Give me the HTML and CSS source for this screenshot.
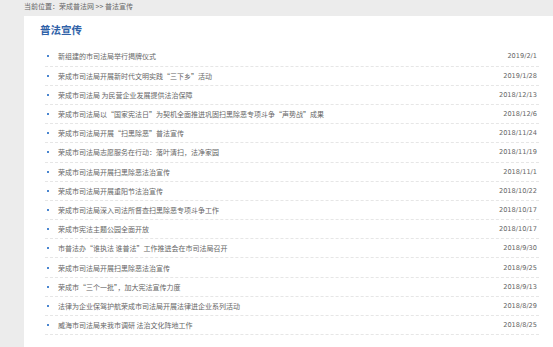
FILE: index.html
```html
<!DOCTYPE html>
<html lang="zh-CN">
<head>
<meta charset="utf-8">
<title>普法宣传</title>
<link rel="stylesheet" href="styles.css">
</head>
<body>
<div class="crumb">当前位置：<a href="#">荣成普法网</a> &gt;&gt; <a href="#">普法宣传</a></div>
<div class="panel">
  <h2 class="title">普法宣传</h2>
  <ul class="list">
    <li><a href="#">新组建的市司法局举行揭牌仪式</a><span class="date">2019/2/1</span></li>
    <li><a href="#">荣成市司法局开展新时代文明实践“三下乡”活动</a><span class="date">2019/1/28</span></li>
    <li><a href="#">荣成市司法局 为民营企业发展提供法治保障</a><span class="date">2018/12/13</span></li>
    <li><a href="#">荣成市司法局以“国家宪法日”为契机全面推进巩固扫黑除恶专项斗争“声势战”成果</a><span class="date">2018/12/6</span></li>
    <li><a href="#">荣成市司法局开展“扫黑除恶”普法宣传</a><span class="date">2018/11/24</span></li>
    <li><a href="#">荣成市司法局志愿服务在行动：落叶清扫，法净家园</a><span class="date">2018/11/19</span></li>
    <li><a href="#">荣成市司法局开展扫黑除恶法治宣传</a><span class="date">2018/11/1</span></li>
    <li><a href="#">荣成市司法局开展重阳节法治宣传</a><span class="date">2018/10/22</span></li>
    <li><a href="#">荣成市司法局深入司法所督查扫黑除恶专项斗争工作</a><span class="date">2018/10/17</span></li>
    <li><a href="#">荣成市宪法主题公园全面开放</a><span class="date">2018/10/17</span></li>
    <li><a href="#">市普法办“谁执法 谁普法”工作推进会在市司法局召开</a><span class="date">2018/9/30</span></li>
    <li><a href="#">荣成市司法局开展扫黑除恶法治宣传</a><span class="date">2018/9/25</span></li>
    <li><a href="#">荣成市“三个一批”，加大宪法宣传力度</a><span class="date">2018/9/13</span></li>
    <li><a href="#">法律为企业保驾护航荣成市司法局开展法律进企业系列活动</a><span class="date">2018/8/29</span></li>
    <li><a href="#">威海市司法局来我市调研 法治文化阵地工作</a><span class="date">2018/8/25</span></li>
  </ul>
</div>
</body>
</html>
```

FILE: styles.css
```css
html, body {
  margin: 0;
  padding: 0;
  height: 100%;
  overflow: hidden;
}
body {
  background: #ececec;
  font-family: "Noto Sans CJK SC", "Liberation Sans", sans-serif;
  color: #555;
}
a {
  color: inherit;
  text-decoration: none;
}
.crumb {
  height: 16px;
  line-height: 13px;
  padding-left: 24px;
  font-size: 7px;
  color: #666;
}
.panel {
  margin-left: 24px;
  background: #fff;
  min-height: 331px;
  padding: 7px 14px 0 16px;
}
.title {
  margin: 0;
  font-size: 10.5px;
  line-height: 14px;
  font-weight: bold;
  color: #2f62a8;
}
.list {
  list-style: none;
  margin: 10.4px 0 0 0;
  padding: 0 0 0 5px;
}
.list li {
  display: flex;
  align-items: center;
  justify-content: space-between;
  height: 19.2px;
  box-sizing: border-box;
  border-bottom: 1px dashed #e6e6e6;
  padding: 0 2px 0 13px;
  font-size: 7px;
  color: #666;
  position: relative;
}
.list li::before {
  content: "";
  position: absolute;
  left: 2px;
  top: 50%;
  width: 2px;
  height: 2px;
  margin-top: -1px;
  background: #4a86d0;
}
.date {
  font-family: "DejaVu Sans", "Liberation Sans", sans-serif;
  font-size: 6.6px;
  color: #666;
}
```
